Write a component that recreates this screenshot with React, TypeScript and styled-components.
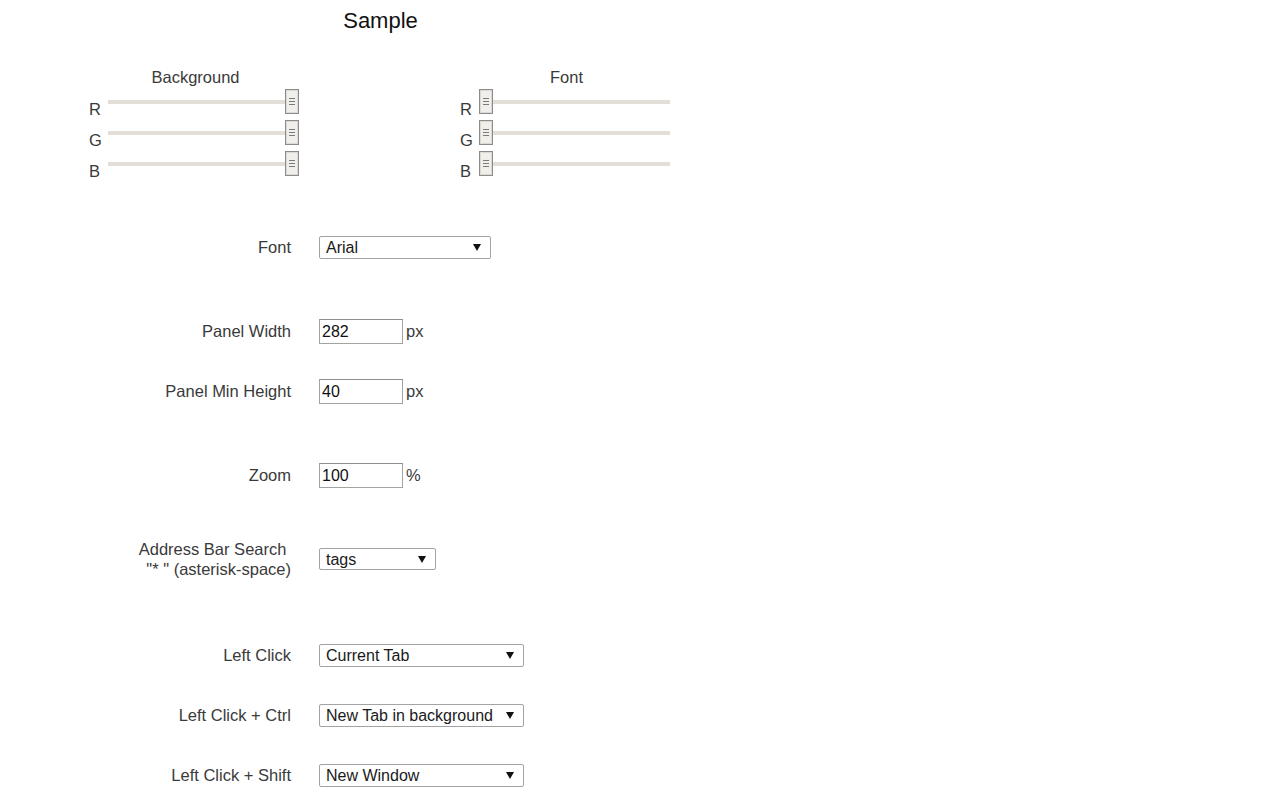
import React from "react";
import styled, { createGlobalStyle } from "styled-components";

const GlobalStyle = createGlobalStyle`
  html, body {
    margin: 0;
    padding: 0;
    background: #ffffff;
  }
  body {
    font-family: "Liberation Sans", Arial, sans-serif;
    color: #333333;
  }
  * { box-sizing: border-box; }
`;

const Page = styled.div`
  width: 1280px;
  min-height: 800px;
  display: flex;
  flex-direction: column;
`;

const Title = styled.h1`
  margin: 0;
  width: 761px;
  height: 42px;
  line-height: 42px;
  text-align: center;
  font-size: 22px;
  font-weight: normal;
  color: #111111;
`;

const SliderSection = styled.div`
  display: flex;
  gap: 160px;
  margin-top: 26px;
  padding-left: 88px;
`;

const SliderGroup = styled.div`
  width: 211px;
  display: flex;
  flex-direction: column;
`;

const GroupLabel = styled.div`
  height: 18px;
  line-height: 18px;
  font-size: 16.5px;
  padding-left: 4px;
  text-align: center;
  color: #3a3a3a;
`;

const SliderRow = styled.div`
  display: flex;
  align-items: flex-start;
  height: 31px;
`;

const Letter = styled.span`
  width: 20px;
  padding-top: 14px;
  padding-left: 1px;
  line-height: 19px;
  font-size: 16.5px;
  color: #3a3a3a;
`;

const SliderArea = styled.div`
  position: relative;
  width: 191px;
  height: 31px;
  display: flex;
  align-items: center;
`;

const Track = styled.div`
  width: 100%;
  height: 4px;
  background: #e3ded8;
`;

const Handle = styled.div`
  position: absolute;
  top: 3px;
  width: 14px;
  height: 25px;
  border: 1px solid #8c8c8c;
  box-shadow: inset 0 0 0 1px #dcd8d2;
  background: #f1efeb;
  display: flex;
  flex-direction: column;
  align-items: center;
  justify-content: center;
  gap: 2px;
`;

const Grip = styled.span`
  width: 6px;
  height: 1px;
  background: #7a7a7a;
`;

const Form = styled.div`
  display: flex;
  flex-direction: column;
`;

const FormRow = styled.div<{ $mt: number }>`
  display: flex;
  align-items: center;
  height: 30px;
  margin-top: ${(p) => p.$mt}px;
`;

const Label = styled.div`
  width: 291px;
  flex-shrink: 0;
  text-align: right;
  font-size: 16.5px;
  line-height: 20px;
  color: #3a3a3a;
  white-space: pre;
`;

const Control = styled.div`
  margin-left: 28px;
  display: flex;
  align-items: center;
`;

const SelectBox = styled.div<{ $w: number; $h: number }>`
  position: relative;
  width: ${(p) => p.$w}px;
  height: ${(p) => p.$h}px;
  border: 1px solid #a3a3a3;
  border-radius: 2px;
  background: #ffffff;
  display: flex;
  align-items: center;
  padding: 1px 0 0 6px;
  font-size: 16px;
  color: #1a1a1a;
`;

const Arrow = styled.svg`
  position: absolute;
  right: 9px;
  top: 50%;
  margin-top: -3px;
`;

const TextInput = styled.input`
  width: 84px;
  height: 25px;
  border: 1px solid #a3a3a3;
  border-top-color: #8e8e8e;
  padding: 1px 2px 0;
  font-family: "Liberation Sans", Arial, sans-serif;
  font-size: 16px;
  color: #111111;
  background: #ffffff;
  outline: none;
`;

const Unit = styled.span`
  margin-left: 3px;
  font-size: 16.5px;
  color: #3a3a3a;
`;

const Slider: React.FC<{ letter: string; value: number }> = ({ letter, value }) => {
  const left = Math.round((value / 255) * (191 - 14)) + (value === 255 ? 0 : 0);
  return (
    <SliderRow>
      <Letter>{letter}</Letter>
      <SliderArea>
        <Track />
        <Handle style={{ left }}>
          <Grip />
          <Grip />
          <Grip />
        </Handle>
      </SliderArea>
    </SliderRow>
  );
};

const Select: React.FC<{ value: string; w: number; h?: number }> = ({ value, w, h = 23 }) => (
  <SelectBox $w={w} $h={h}>
    <span>{value}</span>
    <Arrow width="8" height="7" viewBox="0 0 8 7">
      <polygon points="0,0 8,0 4,7" fill="#111" />
    </Arrow>
  </SelectBox>
);

export default function App() {
  return (
    <Page>
      <GlobalStyle />
      <Title>Sample</Title>
      <SliderSection>
        <SliderGroup>
          <GroupLabel>Background</GroupLabel>
          <Slider letter="R" value={255} />
          <Slider letter="G" value={255} />
          <Slider letter="B" value={255} />
        </SliderGroup>
        <SliderGroup>
          <GroupLabel>Font</GroupLabel>
          <Slider letter="R" value={0} />
          <Slider letter="G" value={0} />
          <Slider letter="B" value={0} />
        </SliderGroup>
      </SliderSection>
      <Form>
        <FormRow $mt={53}>
          <Label>Font</Label>
          <Control>
            <Select value="Arial" w={172} />
          </Control>
        </FormRow>
        <FormRow $mt={54}>
          <Label>Panel Width</Label>
          <Control>
            <TextInput defaultValue="282" />
            <Unit>px</Unit>
          </Control>
        </FormRow>
        <FormRow $mt={30}>
          <Label>Panel Min Height</Label>
          <Control>
            <TextInput defaultValue="40" />
            <Unit>px</Unit>
          </Control>
        </FormRow>
        <FormRow $mt={54}>
          <Label>Zoom</Label>
          <Control>
            <TextInput defaultValue="100" />
            <Unit>%</Unit>
          </Control>
        </FormRow>
        <FormRow $mt={54}>
          <Label>
            {"Address Bar Search "}
            <br />
            {"\"* \" (asterisk-space)"}
          </Label>
          <Control>
            <Select value="tags" w={117} h={22} />
          </Control>
        </FormRow>
        <FormRow $mt={66}>
          <Label>Left Click</Label>
          <Control>
            <Select value="Current Tab" w={205} />
          </Control>
        </FormRow>
        <FormRow $mt={30}>
          <Label>Left Click + Ctrl</Label>
          <Control>
            <Select value="New Tab in background" w={205} />
          </Control>
        </FormRow>
        <FormRow $mt={30}>
          <Label>Left Click + Shift</Label>
          <Control>
            <Select value="New Window" w={205} />
          </Control>
        </FormRow>
      </Form>
    </Page>
  );
}
